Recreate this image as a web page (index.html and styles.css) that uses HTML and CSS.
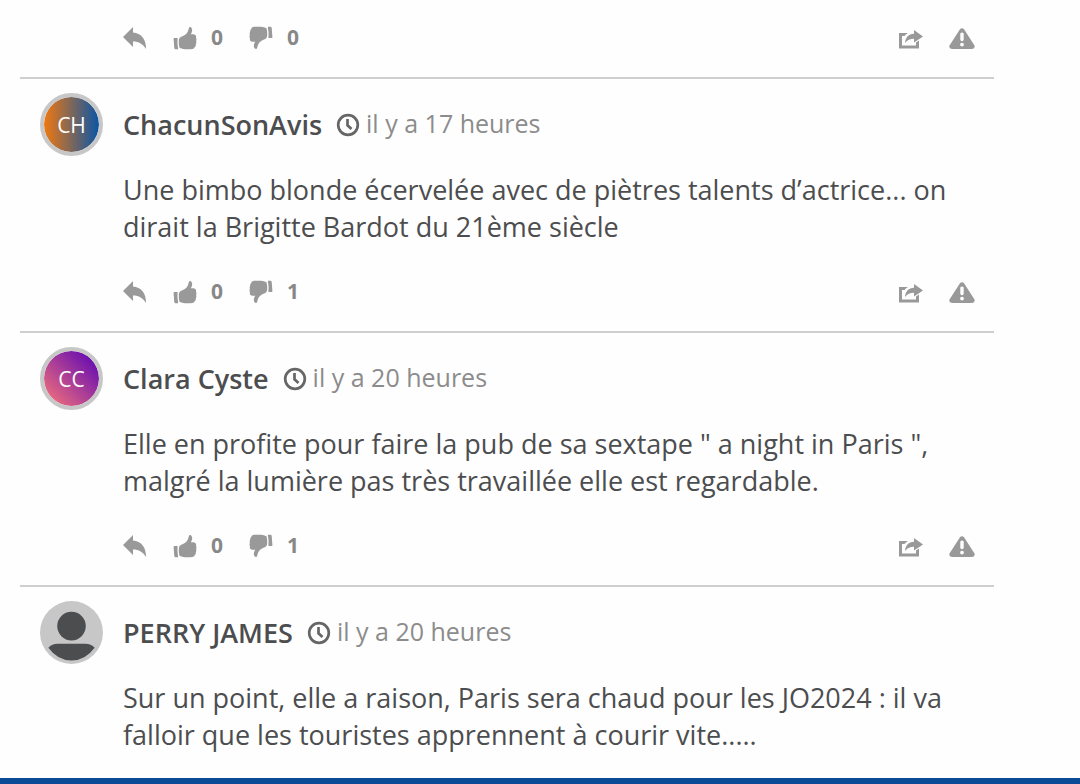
FILE: index.html
```html
<!DOCTYPE html>
<html lang="fr">
<head>
	<meta charset="utf-8">
	<meta name="viewport" content="width=device-width, initial-scale=1">
	<title>Commentaires</title>
	<link rel="stylesheet" href="styles.css">
</head>
<body>
	<!-- icons -->
	<svg class="sprite" aria-hidden="true">
		<symbol id="reply" viewBox="0 0 24 24">
			<path d="M0 11L10 1V6.500C18 7 23.200 13 23 23C20 18 16 15.500 10 15.500V21z"/>
		</symbol>
		<symbol id="thumb" viewBox="0 0 24 24">
			<path d="M1.200 12H4.600Q4 17 5.200 23.200H2.500Q1.500 23.200 1.300 22L.6 13Q.5 12 1.200 12z"/>
			<path d="M5.800 15C5.800 12 7 11.200 9 10.500C12.500 9.200 15 7 15.700 2.800C15.900 1 17.200.6 18.100 1.400C19.900 3 19.200 6 17.800 8.300H20.500C22.700 8.500 23.600 10.300 23 11.800C23.600 12.700 23.600 14.300 23.100 15C23.500 16 23.400 17.500 22.800 18.200C23 19.400 22.500 20.600 21.800 21.100C21.200 22.700 20 23.200 17.500 23.200H12C9.500 23.200 8.500 22.300 6.700 22C5.900 20 5.700 17.500 5.800 15z"/>
		</symbol>
		<symbol id="share" viewBox="0 0 24 20">
			<path d="M0 3H9Q6.500 4.500 5.500 6H3V15.500H17V12.500L20 10.500V18.500H0z"/>
			<path d="M15 0L24 6.500L15 12.500V8.800C11 8.800 8.500 10 6 13C6.500 7.500 9.500 4 15 3.800z"/>
		</symbol>
		<symbol id="alert" viewBox="0 0 26 22">
			<path fill-rule="evenodd" d="M10.800 1.500Q13-.9 15.200 1.500L25.500 17.500Q26.500 20.900 23 21H3Q-.5 20.900.5 17.500zM11.300 5.500V12Q13 14.500 14.700 12V5.500Q13 3.500 11.300 5.500zM13 14.700A1.900 1.900 0 1 0 13 18.500A1.900 1.900 0 1 0 13 14.700z"/>
		</symbol>
		<symbol id="clock" viewBox="0 0 24 24">
			<circle cx="12" cy="12" r="9.800" fill="none" stroke="currentColor" stroke-width="2.700"/>
			<path d="M11.500 6V12.300L15.500 16" fill="none" stroke="currentColor" stroke-width="2.700"/>
		</symbol>
	</svg>

	<main class="comments">
		<article class="comment comment-first">
			<div class="actions">
				<button type="button" class="btn" aria-label="Répondre"><svg class="icon"><use href="#reply"/></svg></button>
				<button type="button" class="btn vote" aria-label="J'aime"><svg class="icon"><use href="#thumb"/></svg><span>0</span></button>
				<button type="button" class="btn vote" aria-label="Je n'aime pas"><svg class="icon down"><use href="#thumb"/></svg><span>0</span></button>
				<div class="tools">
					<button type="button" class="btn" aria-label="Partager"><svg class="icon share"><use href="#share"/></svg></button>
					<button type="button" class="btn" aria-label="Signaler"><svg class="icon alert"><use href="#alert"/></svg></button>
				</div>
			</div>
		</article>

		<article class="comment">
			<header class="head">
				<div class="avatar avatar-ch">CH</div>
				<h2 class="name">ChacunSonAvis</h2>
				<div class="date"><svg class="clock"><use href="#clock"/></svg><time>il y a 17 heures</time></div>
			</header>
			<p class="text">Une bimbo blonde écervelée avec de piètres talents d’actrice... on dirait la Brigitte Bardot du 21ème siècle</p>
			<div class="actions">
				<button type="button" class="btn" aria-label="Répondre"><svg class="icon"><use href="#reply"/></svg></button>
				<button type="button" class="btn vote" aria-label="J'aime"><svg class="icon"><use href="#thumb"/></svg><span>0</span></button>
				<button type="button" class="btn vote" aria-label="Je n'aime pas"><svg class="icon down"><use href="#thumb"/></svg><span>1</span></button>
				<div class="tools">
					<button type="button" class="btn" aria-label="Partager"><svg class="icon share"><use href="#share"/></svg></button>
					<button type="button" class="btn" aria-label="Signaler"><svg class="icon alert"><use href="#alert"/></svg></button>
				</div>
			</div>
		</article>

		<article class="comment">
			<header class="head">
				<div class="avatar avatar-cc">CC</div>
				<h2 class="name">Clara Cyste</h2>
				<div class="date"><svg class="clock"><use href="#clock"/></svg><time>il y a 20 heures</time></div>
			</header>
			<p class="text">Elle en profite pour faire la pub de sa sextape " a night in Paris ", malgré la lumière pas très travaillée elle est regardable.</p>
			<div class="actions">
				<button type="button" class="btn" aria-label="Répondre"><svg class="icon"><use href="#reply"/></svg></button>
				<button type="button" class="btn vote" aria-label="J'aime"><svg class="icon"><use href="#thumb"/></svg><span>0</span></button>
				<button type="button" class="btn vote" aria-label="Je n'aime pas"><svg class="icon down"><use href="#thumb"/></svg><span>1</span></button>
				<div class="tools">
					<button type="button" class="btn" aria-label="Partager"><svg class="icon share"><use href="#share"/></svg></button>
					<button type="button" class="btn" aria-label="Signaler"><svg class="icon alert"><use href="#alert"/></svg></button>
				</div>
			</div>
		</article>

		<article class="comment">
			<header class="head">
				<svg class="avatar-default" viewBox="0 0 64 64" aria-hidden="true">
					<circle cx="32" cy="32" r="32" fill="#c7c7c7"/>
					<circle cx="32" cy="25.500" r="14.500" fill="#4c4d4f"/>
					<path d="M8.500 47.500Q12 43.500 18 43.500H46Q52 43.500 55.500 47.500Q46 60.500 32 60.500T8.500 47.500z" fill="#4c4d4f"/>
				</svg>
				<h2 class="name">PERRY JAMES</h2>
				<div class="date"><svg class="clock"><use href="#clock"/></svg><time>il y a 20 heures</time></div>
			</header>
			<p class="text">Sur un point, elle a raison, Paris sera chaud pour les JO2024 : il va falloir que les touristes apprennent à courir vite.....</p>
		</article>
	</main>
	<footer class="bar"></footer>
</body>
</html>
```
FILE: styles.css
```css
* {
	box-sizing: border-box;
	margin: 0;
	padding: 0;
}
body {
	font-family: "Open Sans", "Noto Sans", sans-serif;
	color: #4c4d4f;
	background: #fefefe;
}
.sprite {
	display: none;
}
.comments {
	margin: 0 86px 0 20px;
}
.comment {
	padding: 14px 19px 25px 20px;
	border-bottom: 2px solid #cfcfcf;
}
.comment:last-child {
	border-bottom: none;
}
.comment-first {
	padding-top: 22px;
}
.head {
	display: flex;
	align-items: center;
}
.avatar,
.avatar-default {
	flex: none;
	width: 63px;
	height: 63px;
}
.avatar {
	border: 4px solid #c7c7c7;
	border-radius: 50%;
	font-size: 21px;
	line-height: 57px;
	text-align: center;
	color: #fff;
}
.avatar-ch {
	background: linear-gradient(90deg, #f07810, #0a55a5) padding-box;
}
.avatar-cc {
	background: linear-gradient(45deg, #fb7777, #5500b8) padding-box;
}
.name {
	margin-left: 20px;
	font-size: 27px;
	font-weight: 600;
	line-height: 37px;
}
.date {
	display: flex;
	align-items: center;
	margin-left: 14px;
	padding-bottom: 2px;
	font-size: 25px;
	line-height: 37px;
	color: #8c8c8c;
}
.clock {
	width: 24px;
	height: 24px;
	margin: 2px 6px 0 0;
	color: #666;
}
.text {
	margin: 15px 0 0 83px;
	font-size: 27px;
	line-height: 37px;
}
.actions {
	display: flex;
	align-items: center;
	gap: 26px;
	height: 30px;
	margin-left: 83px;
}
.text + .actions {
	margin-top: 31px;
}
.btn {
	display: flex;
	align-items: center;
	border: none;
	background: none;
	font-family: inherit;
	font-size: 21px;
	font-weight: 700;
	line-height: 30px;
	color: #888;
	cursor: pointer;
}
.btn:hover {
	color: #555;
}
.vote {
	gap: 14px;
}
.icon {
	width: 24px;
	height: 24px;
	margin-top: 2px;
	fill: #999;
}
.down {
	transform: rotate(180deg);
}
.share {
	height: 20px;
	margin-top: 4px;
}
.alert {
	width: 26px;
	height: 22px;
}
.tools {
	display: flex;
	align-items: center;
	gap: 26px;
	margin: 2px 0 0 auto;
}
.bar {
	height: 6px;
	background: #0b4a94;
}
```
